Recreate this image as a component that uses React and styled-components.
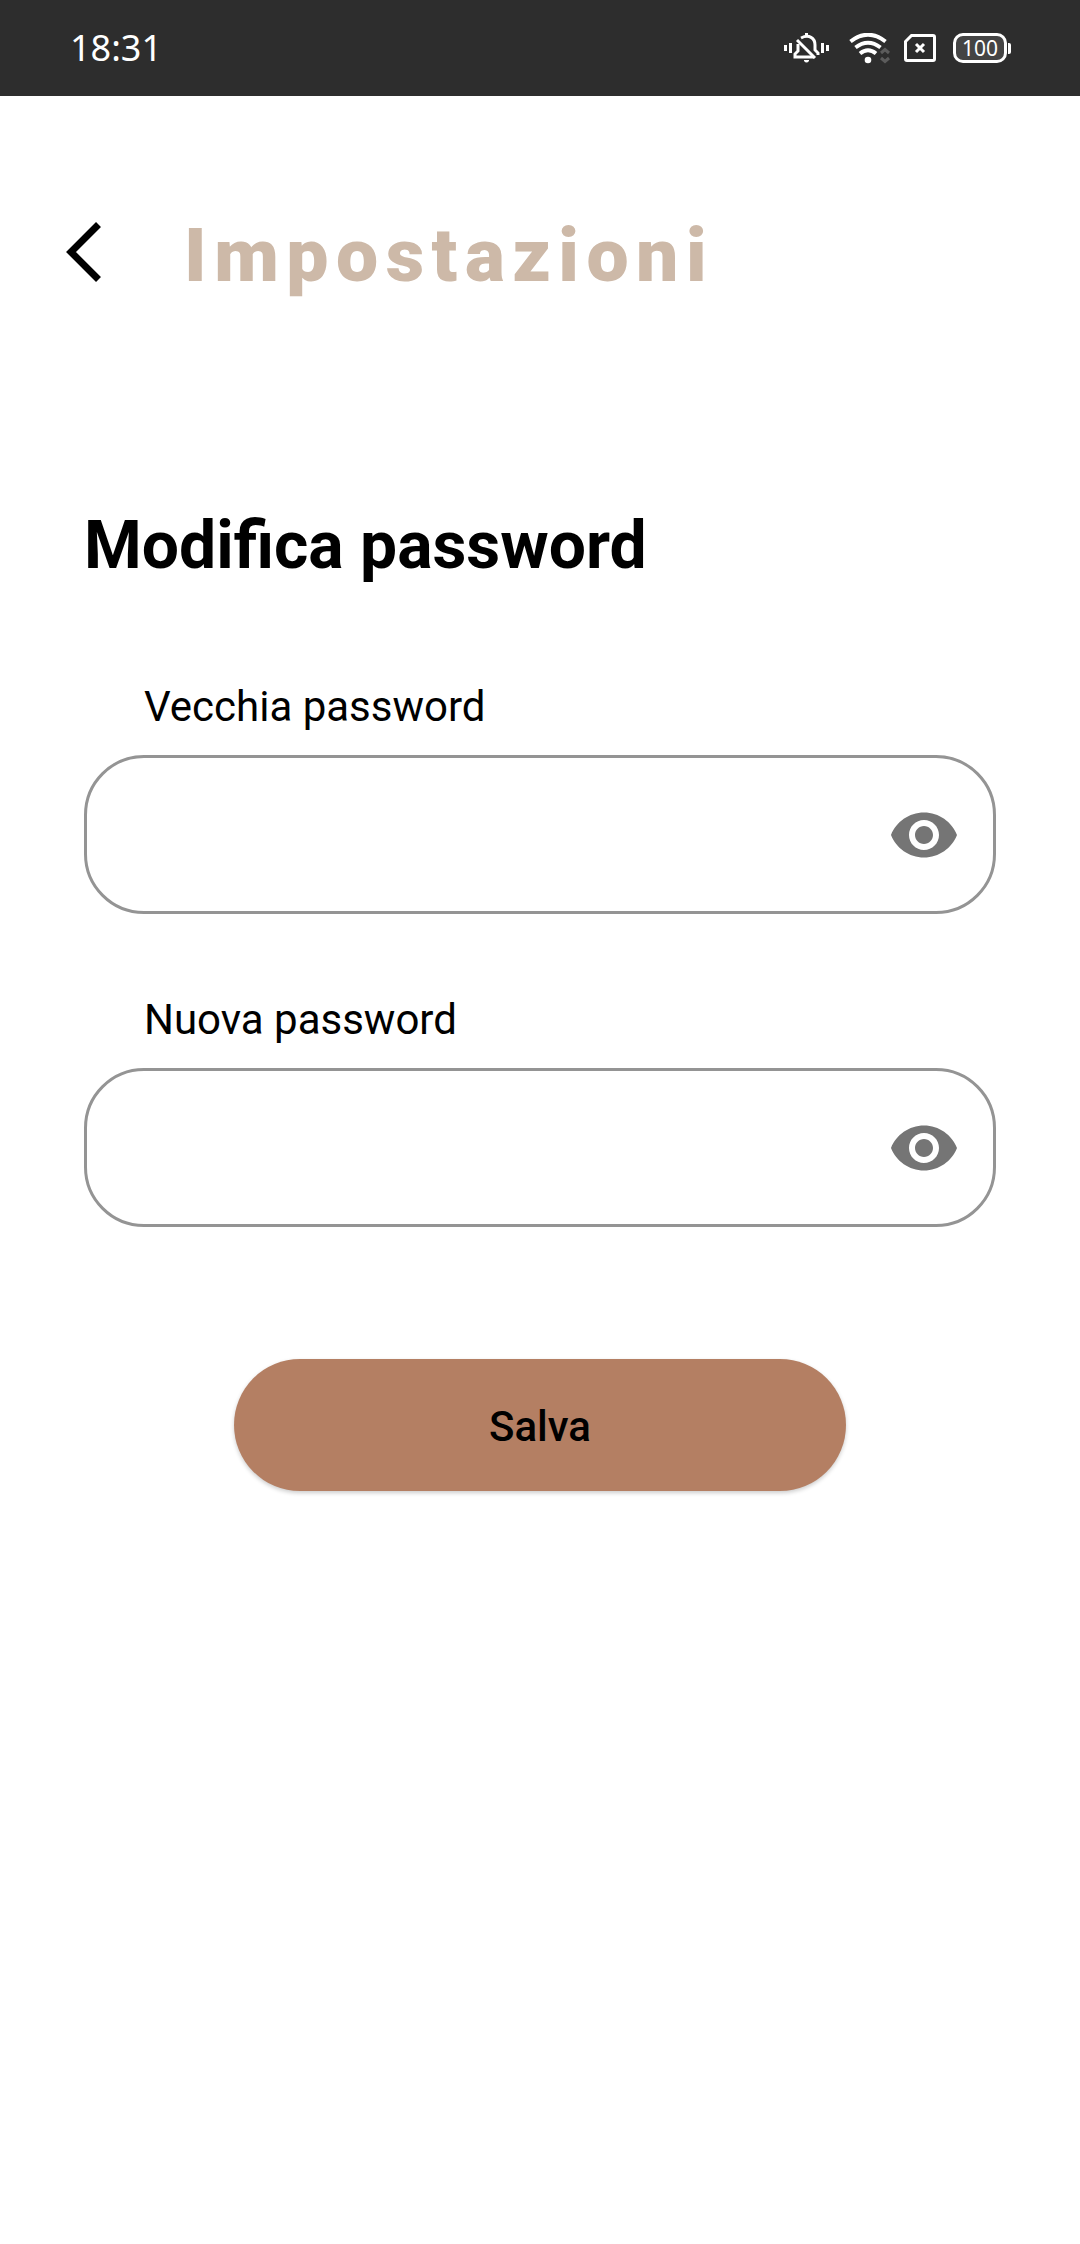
import React, { useState } from "react";
import styled, { createGlobalStyle } from "styled-components";

const GlobalStyle = createGlobalStyle`
  *, *::before, *::after { box-sizing: border-box; }
  body {
    margin: 0;
    background: #ffffff;
    color: #000000;
    font-family: Roboto, "Liberation Sans", sans-serif;
  }
`;

const StatusBar = styled.div`
  display: flex;
  align-items: center;
  justify-content: space-between;
  height: 96px;
  padding: 0 69px 0 70px;
  background: #2d2d2d;
  color: #ffffff;
`;

const Clock = styled.time`
  font-family: "Noto Sans", Roboto, sans-serif;
  font-size: 36px;
  line-height: 48px;
`;

const StatusIcons = styled.div`
  display: flex;
  align-items: center;

  svg { display: block; }
`;

const WifiSlot = styled.span`
  margin: 0 14px 0 19px;
`;

const Battery = styled.span`
  display: flex;
  align-items: center;
  gap: 1px;
  margin-left: 17px;

  &::after {
    content: "";
    width: 3px;
    height: 11px;
    border-radius: 0 2px 2px 0;
    background: #ffffff;
  }
`;

const BatteryLevel = styled.span`
  display: flex;
  align-items: center;
  justify-content: center;
  width: 54px;
  height: 30px;
  border: 3px solid #ffffff;
  border-radius: 10px;
  background: #444444;
  font-family: "Noto Sans", Roboto, sans-serif;
  font-size: 21px;
  line-height: 24px;
`;

const Header = styled.header`
  display: flex;
  align-items: flex-start;
  padding: 120px 48px 0 60px;
`;

const BackButton = styled.button`
  display: flex;
  margin: 0;
  padding: 6px;
  border: 0;
  background: none;
  cursor: pointer;
`;

const PageTitle = styled.h1`
  margin: 0 0 0 76px;
  color: #cdb9a8;
  font-size: 75px;
  font-weight: 900;
  line-height: 78px;
  letter-spacing: 0.1em;
`;

const Main = styled.main`
  display: flex;
  flex-direction: column;
  padding: 212px 84px 48px;
`;

const SectionTitle = styled.h2`
  margin: 0;
  font-size: 66px;
  font-weight: 700;
  line-height: 80px;
`;

const Form = styled.form`
  display: flex;
  flex-direction: column;
  gap: 76px;
  margin-top: 91px;
`;

const Field = styled.div`
  display: flex;
  flex-direction: column;
  gap: 18px;
`;

const Label = styled.label`
  padding-left: 60px;
  font-size: 42px;
  line-height: 60px;
`;

const InputFrame = styled.div`
  display: flex;
  align-items: center;
  height: 159px;
  padding: 0 33px 0 57px;
  border: 3px solid #949494;
  border-radius: 60px;
`;

const PasswordInput = styled.input`
  flex: 1;
  min-width: 0;
  height: 100%;
  padding: 0;
  border: 0;
  outline: 0;
  background: none;
  font-family: inherit;
  font-size: 42px;
`;

const RevealButton = styled.button`
  display: flex;
  margin: 0;
  padding: 0;
  border: 0;
  background: none;
  color: #757575;
  cursor: pointer;
`;

const SaveButton = styled.button`
  align-self: center;
  width: 100%;
  max-width: 612px;
  height: 132px;
  margin-top: 56px;
  padding: 3px 0 0;
  border: 0;
  border-radius: 66px;
  background: #b47f63;
  box-shadow: 0 2px 4px rgba(0, 0, 0, 0.2);
  color: #000000;
  font-family: inherit;
  font-size: 42px;
  font-weight: 500;
  line-height: 60px;
  cursor: pointer;
`;

function MutedBellIcon() {
  return (
    <svg width="46" height="30" viewBox="0 0 46 30" fill="none" aria-hidden="true">
      <path d="M0 12h3v6H0zM5 10h3v10H5zM37 10h3v10h-3zM42 12h3v6h-3z" fill="#fff" />
      <path d="M21 0h3v4h-3z" fill="#fff" />
      <path d="M17 5c8-4 14 0 14 7v5l3 3v2M14 11v7l-3 3v3h19" stroke="#fff" strokeWidth="3" />
      <path d="M13 7l18 18" stroke="#fff" strokeWidth="3" />
      <path d="M20 27h5v1q-2.500 3-5 0z" fill="#fff" />
    </svg>
  );
}

function WifiIcon() {
  return (
    <svg width="41" height="31" viewBox="0 0 41 31" fill="none" aria-hidden="true">
      <path d="M1.500 8.500Q19 -5 36.500 8.500" stroke="#fff" strokeWidth="4" />
      <path d="M6.500 14.500Q19 5 31.500 14.500" stroke="#fff" strokeWidth="4" />
      <path d="M11 20.500Q19 14 27 20.500" stroke="#fff" strokeWidth="4" />
      <circle cx="19" cy="27" r="3.300" fill="#fff" />
      <path d="M32 20l4-3.500 4 3.500M32 25l4 3.500 4-3.500" stroke="#5c5c5c" strokeWidth="3" />
    </svg>
  );
}

function NoSimIcon() {
  return (
    <svg width="32" height="28" viewBox="0 0 32 28" fill="none" stroke="#fff" strokeWidth="3" aria-hidden="true">
      <path d="M7.500 1.500H29q1.500 0 1.500 1.500V25q0 1.500-1.500 1.500H3q-1.500 0-1.500-1.500V7.500z" />
      <path d="M12 10l8 8M20 10l-8 8" />
    </svg>
  );
}

function BackIcon() {
  return (
    <svg width="36" height="60" viewBox="0 0 36 60" fill="none" stroke="#000" strokeWidth="7" aria-hidden="true">
      <path d="M32.500 2.500L5 30l27.500 27.500" />
    </svg>
  );
}

function EyeIcon() {
  return (
    <svg width="72" height="72" viewBox="0 0 24 24" fill="currentColor" aria-hidden="true">
      <path d="M12 4.500C7 4.500 2.730 7.610 1 12c1.730 4.390 6 7.500 11 7.500s9.270-3.110 11-7.500c-1.730-4.390-6-7.500-11-7.500zM12 17c-2.760 0-5-2.240-5-5s2.240-5 5-5 5 2.240 5 5-2.240 5-5 5zm0-8c-1.660 0-3 1.340-3 3s1.340 3 3 3 3-1.340 3-3-1.340-3-3-3z" />
    </svg>
  );
}

function PasswordField({ id, label }) {
  const [visible, setVisible] = useState(false);
  return (
    <Field>
      <Label htmlFor={id}>{label}</Label>
      <InputFrame>
        <PasswordInput id={id} type={visible ? "text" : "password"} />
        <RevealButton type="button" aria-label="Mostra password" onClick={() => setVisible(!visible)}>
          <EyeIcon />
        </RevealButton>
      </InputFrame>
    </Field>
  );
}

export default function App() {
  return (
    <>
      <GlobalStyle />
      <StatusBar>
        <Clock>18:31</Clock>
        <StatusIcons>
          <MutedBellIcon />
          <WifiSlot>
            <WifiIcon />
          </WifiSlot>
          <NoSimIcon />
          <Battery>
            <BatteryLevel>100</BatteryLevel>
          </Battery>
        </StatusIcons>
      </StatusBar>
      <Header>
        <BackButton type="button" aria-label="Indietro">
          <BackIcon />
        </BackButton>
        <PageTitle>Impostazioni</PageTitle>
      </Header>
      <Main>
        <SectionTitle>Modifica password</SectionTitle>
        <Form onSubmit={(event) => event.preventDefault()}>
          <PasswordField id="old-password" label="Vecchia password" />
          <PasswordField id="new-password" label="Nuova password" />
          <SaveButton type="submit">Salva</SaveButton>
        </Form>
      </Main>
    </>
  );
}
